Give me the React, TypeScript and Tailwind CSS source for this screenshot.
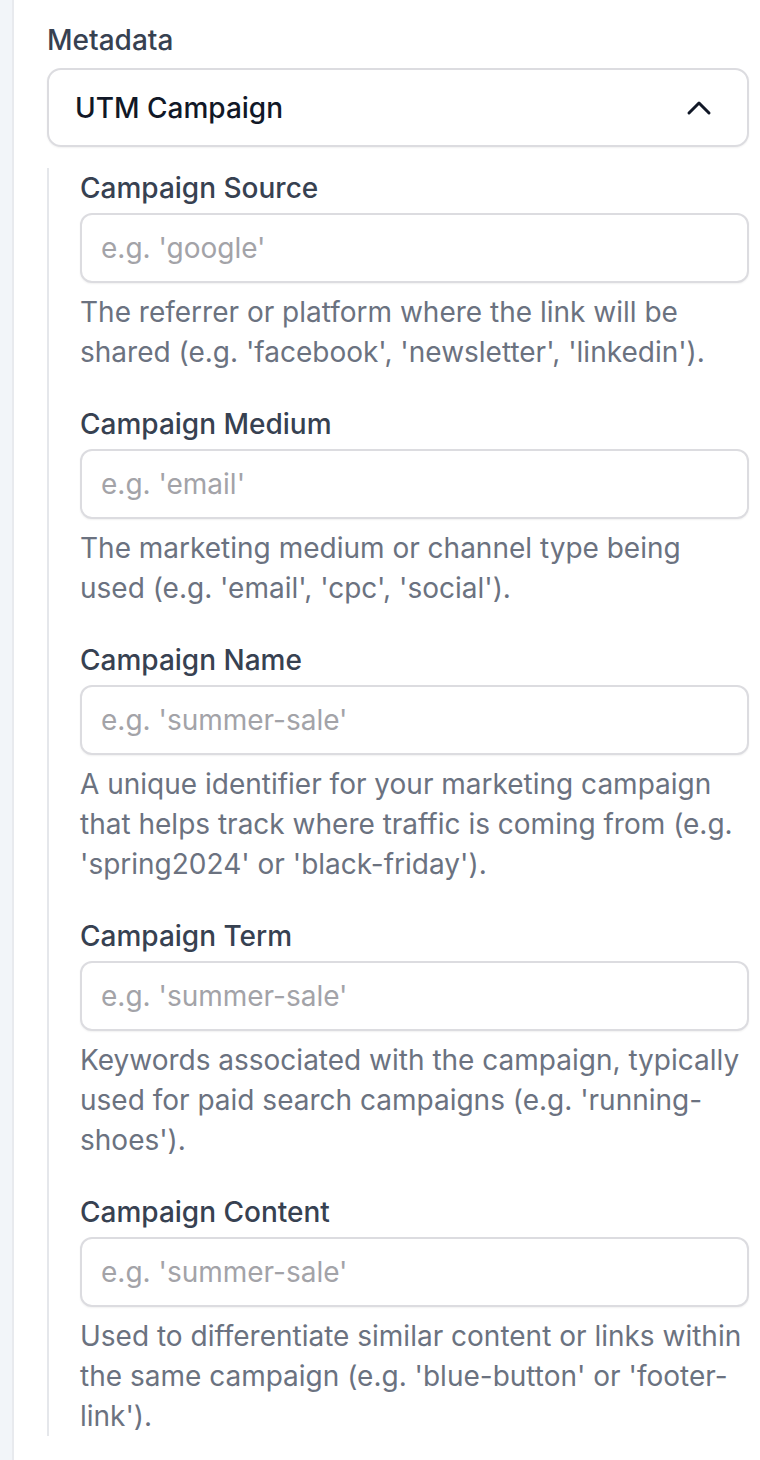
import { ChevronUp } from "lucide-react";

const FIELDS = [
  {
    label: "Campaign Source",
    placeholder: "e.g. 'google'",
    help: "The referrer or platform where the link will be shared (e.g. 'facebook', 'newsletter', 'linkedin').",
  },
  {
    label: "Campaign Medium",
    placeholder: "e.g. 'email'",
    help: "The marketing medium or channel type being used (e.g. 'email', 'cpc', 'social').",
  },
  {
    label: "Campaign Name",
    placeholder: "e.g. 'summer-sale'",
    help: "A unique identifier for your marketing campaign that helps track where traffic is coming from (e.g. 'spring2024' or 'black-friday').",
  },
  {
    label: "Campaign Term",
    placeholder: "e.g. 'summer-sale'",
    help: "Keywords associated with the campaign, typically used for paid search campaigns (e.g. 'running-shoes').",
  },
  {
    label: "Campaign Content",
    placeholder: "e.g. 'summer-sale'",
    help: "Used to differentiate similar content or links within the same campaign (e.g. 'blue-button' or 'footer-link').",
  },
];

export default function App() {
  return (
    <div className="flex min-h-[1460px] w-[760px] bg-white font-['Inter',sans-serif]">
      {/* Side strip */}
      <div className="w-[14px] shrink-0 bg-[#f2f5f9] border-r-2 border-[#e8eaee]" />

      <div className="flex-1 pl-[33px] pr-[11px] pt-[20px]">
        <p className="text-[28px] leading-[40px] font-medium text-[#374151]">Metadata</p>

        {/* Accordion trigger */}
        <button className="mt-[8px] w-full h-[79px] flex items-center justify-between pl-[26px] pr-[28px] border-2 border-[#dcdce0] rounded-[14px] bg-white text-left shadow-[0_1px_2px_rgba(0,0,0,0.06)]">
          <span className="text-[28px] leading-[40px] font-medium text-[#111827]">UTM Campaign</span>
          <ChevronUp size={40} strokeWidth={1.8} className="text-[#111827]" />
        </button>

        {/* Accordion content */}
        <div className="mt-[21px] border-l-2 border-[#e5e7eb] pl-[31px] flex flex-col gap-[32px]">
          {FIELDS.map((f) => (
            <div key={f.label}>
              <label className="block text-[28px] leading-[40px] font-medium text-[#374151]">
                {f.label}
              </label>
              <input
                placeholder={f.placeholder}
                className="mt-[5px] block w-full h-[70px] px-[19px] border-2 border-[#dcdce0] rounded-[12px] bg-white text-[28px] text-[#111827] placeholder:text-[#a3a3a8] outline-none shadow-[0_1px_2px_rgba(0,0,0,0.06)]"
              />
              <p className="mt-[9px] text-[28px] leading-[40px] text-[#6b7280]">{f.help}</p>
            </div>
          ))}
        </div>
      </div>
    </div>
  );
}
